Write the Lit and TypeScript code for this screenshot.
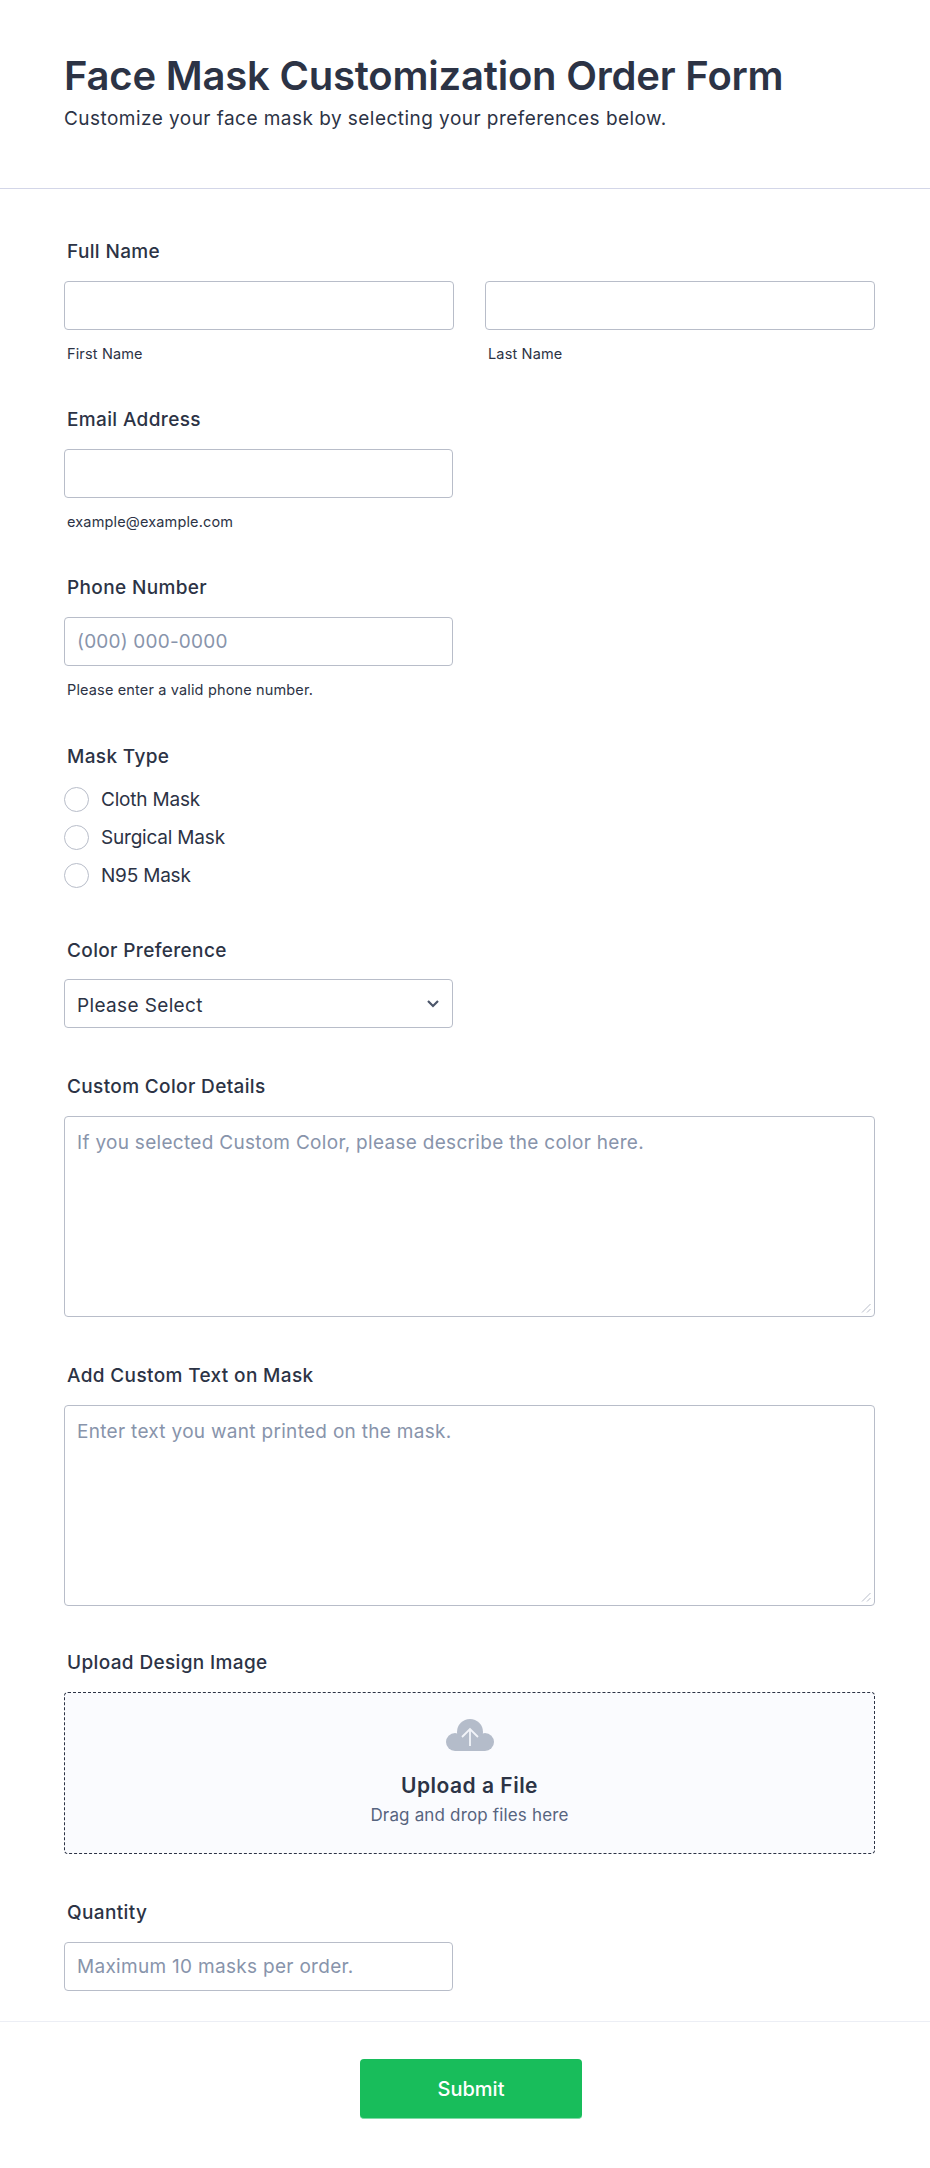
import { html, css, LitElement } from 'lit'
import { customElement } from 'lit/decorators.js'

@customElement('app-root')
export class AppRoot extends LitElement {
  static styles = css`
    :host {
      display: block;
      background: #fff;
      font-family: Inter, "Liberation Sans", sans-serif;
      color: #2c3345;
    }

    .header {
      padding: 50px 64px 0;
      height: 138px;
      border-bottom: 1px solid #d3d6e8;
    }

    .header__title {
      margin: 0;
      font-size: 40px;
      line-height: 52px;
      font-weight: 600;
      letter-spacing: -0.2px;
    }

    .header__sub {
      margin: 3px 0 0;
      font-size: 19px;
      line-height: 28px;
      font-weight: 400;
      letter-spacing: 0.46px;
    }

    .form {
      padding: 50px 55px 0 64px;
    }

    .field {
      margin-bottom: 46px;
    }

    .field--sub {
      margin-bottom: 44px;
    }

    .field--phone {
      margin-bottom: 45px;
    }

    .field--radios {
      margin-bottom: 51px;
    }

    .field--color .label {
      margin-bottom: 15px;
    }

    .field--tight {
      margin-bottom: 44px;
    }

    .label {
      display: block;
      margin: 0 0 16px 3px;
      font-size: 19px;
      line-height: 26px;
      font-weight: 500;
      letter-spacing: 0.36px;
    }

    .sub {
      display: block;
      margin: 15px 0 0 3px;
      font-size: 14.500px;
      line-height: 18px;
      letter-spacing: 0.15px;
    }

    .name-row {
      display: grid;
      grid-template-columns: 390px 390px;
      gap: 31px;
    }

    .input {
      display: block;
      box-sizing: border-box;
      width: 389px;
      height: 49px;
      padding: 0 12px;
      border: 1px solid #b8bdc9;
      border-radius: 4px;
      background: #fff;
      font: 400 19px Inter, sans-serif;
      letter-spacing: 0.3px;
      color: #2c3345;
      outline: none;
    }

    .input--phone {
      letter-spacing: 0.2px;
    }

    .name-row .input {
      width: 390px;
    }

    .input::placeholder,
    .area::placeholder {
      color: #8894ab;
      opacity: 1;
    }

    .area-wrap {
      position: relative;
      width: 811px;
    }

    .area-wrap svg {
      position: absolute;
      right: 4px;
      bottom: 4px;
    }

    .area {
      display: block;
      box-sizing: border-box;
      width: 811px;
      height: 201px;
      padding: 14px 12px;
      border: 1px solid #b8bdc9;
      border-radius: 4px;
      background: #fff;
      font: 400 19px/24px Inter, sans-serif;
      letter-spacing: 0.3px;
      color: #2c3345;
      outline: none;
      resize: none;
    }

    .radios {
      display: flex;
      flex-direction: column;
      gap: 14px;
      margin-top: 17px;
    }

    .radio {
      display: flex;
      align-items: center;
      gap: 12px;
      height: 24px;
      font-size: 19px;
      letter-spacing: -0.2px;
    }

    .radio__dot {
      box-sizing: border-box;
      width: 25px;
      height: 25px;
      border: 1px solid #b8bdc9;
      border-radius: 50%;
      background: #fff;
    }

    .select-wrap {
      position: relative;
      width: 389px;
    }

    .select {
      appearance: none;
      display: block;
      box-sizing: border-box;
      width: 100%;
      height: 49px;
      padding: 3px 12px 0;
      border: 1px solid #b8bdc9;
      border-radius: 4px;
      background: #fff;
      font: 400 19px Inter, sans-serif;
      letter-spacing: 0.36px;
      color: #2c3345;
      outline: none;
    }

    .select-wrap svg {
      position: absolute;
      right: 13px;
      top: 20px;
      pointer-events: none;
    }

    .upload {
      box-sizing: border-box;
      display: flex;
      flex-direction: column;
      align-items: center;
      width: 811px;
      height: 162px;
      padding-top: 26px;
      border: 1px dashed #2c3345;
      border-radius: 4px;
      background: #fafbfe;
    }

    .upload svg {
      display: block;
    }

    .upload__title {
      margin-top: 21px;
      font-size: 21px;
      line-height: 28px;
      font-weight: 600;
      letter-spacing: 0.5px;
    }

    .upload__hint {
      margin-top: 3px;
      font-size: 17px;
      line-height: 24px;
      color: #57647e;
      letter-spacing: 0.16px;
    }

    .field--last {
      margin-bottom: 30px;
    }

    .footer {
      display: flex;
      justify-content: center;
      height: 147px;
      padding: 37px 0 0 12px;
      box-sizing: border-box;
      border-top: 1px solid #eceef5;
    }

    .submit {
      width: 222px;
      height: 60px;
      border: 0;
      border-bottom: 1px solid #7fdca6;
      border-radius: 4px;
      background: #18bd5b;
      color: #fff;
      font: 500 20px Inter, sans-serif;
    }
  `

  renderArea (placeholder: string) {
    return html`
      <div class="area-wrap">
        <textarea class="area" placeholder=${placeholder}></textarea>
        <svg width="10" height="10" viewBox="0 0 10 10" fill="none" stroke="#b8bdc9" stroke-width="1">
          <path d="M1 9.500L9.500 1M6 9.500L9.500 6" />
        </svg>
      </div>
    `
  }

  render () {
    return html`
      <header class="header">
        <h1 class="header__title">Face Mask Customization Order Form</h1>
        <p class="header__sub">Customize your face mask by selecting your preferences below.</p>
      </header>

      <form class="form">
        <div class="field field--sub">
          <label class="label">Full Name</label>
          <div class="name-row">
            <div>
              <input class="input" type="text" />
              <span class="sub">First Name</span>
            </div>
            <div>
              <input class="input" type="text" />
              <span class="sub">Last Name</span>
            </div>
          </div>
        </div>

        <div class="field field--sub">
          <label class="label">Email Address</label>
          <input class="input" type="email" />
          <span class="sub">example@example.com</span>
        </div>

        <div class="field field--phone">
          <label class="label">Phone Number</label>
          <input class="input input--phone" type="tel" placeholder="(000) 000-0000" />
          <span class="sub">Please enter a valid phone number.</span>
        </div>

        <div class="field field--radios">
          <label class="label">Mask Type</label>
          <div class="radios">
            ${['Cloth Mask', 'Surgical Mask', 'N95 Mask'].map(m => html`
              <div class="radio"><span class="radio__dot"></span>${m}</div>
            `)}
          </div>
        </div>

        <div class="field field--color">
          <label class="label">Color Preference</label>
          <div class="select-wrap">
            <select class="select"><option>Please Select</option></select>
            <svg width="14" height="10" viewBox="0 0 14 10" fill="none" stroke="#4c566a" stroke-width="2.2">
              <path d="M2 2l5 5 5-5" />
            </svg>
          </div>
        </div>

        <div class="field">
          <label class="label">Custom Color Details</label>
          ${this.renderArea('If you selected Custom Color, please describe the color here.')}
        </div>

        <div class="field field--tight">
          <label class="label">Add Custom Text on Mask</label>
          ${this.renderArea('Enter text you want printed on the mask.')}
        </div>

        <div class="field">
          <label class="label">Upload Design Image</label>
          <div class="upload">
            <svg width="48" height="32" viewBox="0 0 48 32">
              <g fill="#b4bcca">
                <circle cx="24" cy="13" r="13" />
                <circle cx="9" cy="23" r="9" />
                <circle cx="39" cy="23" r="9" />
                <rect x="9" y="18" width="30" height="14" />
              </g>
              <path fill="none" stroke="#f2f4f9" stroke-width="1.800" d="M24 27V10M16 18l8-8 8 8" />
            </svg>
            <div class="upload__title">Upload a File</div>
            <div class="upload__hint">Drag and drop files here</div>
          </div>
        </div>

        <div class="field field--last">
          <label class="label">Quantity</label>
          <input class="input" type="text" placeholder="Maximum 10 masks per order." />
        </div>
      </form>

      <footer class="footer">
        <button class="submit" type="button">Submit</button>
      </footer>
    `
  }
}
